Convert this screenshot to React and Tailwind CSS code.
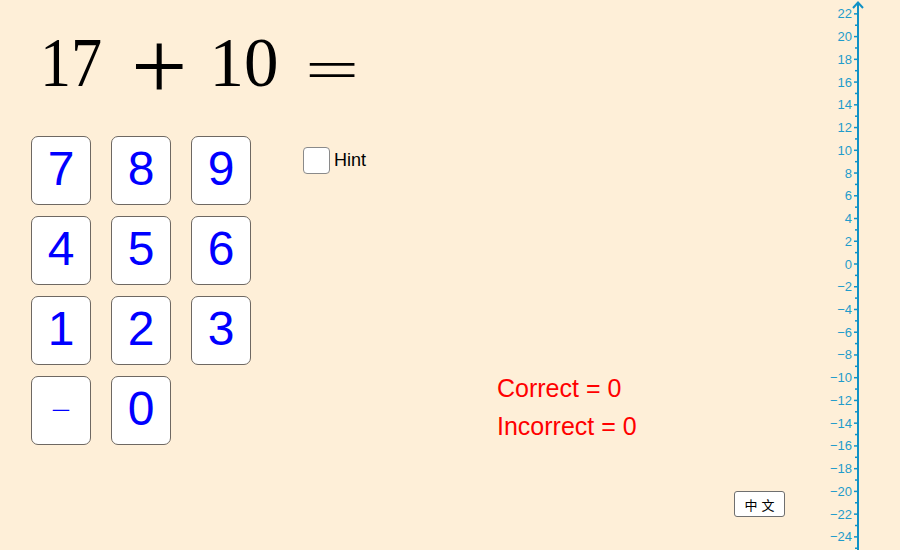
const KEYS = ['7', '8', '9', '4', '5', '6', '1', '2', '3', '−', '0']

const AXIS_X = 38
const UNIT = 11.37
const ZERO_Y = 264

function yOf(v) {
  return ZERO_Y - v * UNIT
}

function NumberAxis() {
  const ticks = []
  for (let v = -25; v <= 22; v++) ticks.push(v)
  const labels = ticks.filter((v) => v % 2 === 0 && v >= -24)

  return (
    <svg width="80" height="550" viewBox="0 0 80 550" className="shrink-0">
      <line x1={AXIS_X} y1="2" x2={AXIS_X} y2="550" stroke="#1192c6" strokeWidth="2" />
      <polyline
        points={`${AXIS_X - 5},8 ${AXIS_X},2.5 ${AXIS_X + 5},8`}
        fill="none"
        stroke="#1192c6"
        strokeWidth="2"
      />
      {ticks.map((v) => (
        <line
          key={v}
          x1={v % 2 === 0 ? AXIS_X - 4 : AXIS_X - 3}
          y1={yOf(v)}
          x2={AXIS_X}
          y2={yOf(v)}
          stroke="#1192c6"
          strokeWidth="1.5"
        />
      ))}
      {labels.map((v) => (
        <text
          key={v}
          x={AXIS_X - 6}
          y={yOf(v) + 4.5}
          textAnchor="end"
          fill="#1f9ccb"
          fontSize="13"
          fontFamily="'Liberation Sans', Arial, sans-serif"
        >
          {v < 0 ? `−${-v}` : v}
        </text>
      ))}
    </svg>
  )
}

function Key({ label }) {
  const isMinus = label === '−'
  return (
    <button className="w-[60px] h-[69px] rounded-[7px] border border-[#6e6862] bg-white flex items-center justify-center pb-[4px] text-[#0000ff] font-['Liberation_Sans',Arial,sans-serif] leading-none">
      {isMinus ? (
        <span className="text-[34px] scale-y-50 inline-block pt-[2px]">−</span>
      ) : (
        <span className="text-[48px]">{label}</span>
      )}
    </button>
  )
}

export default function App() {
  return (
    <div className="w-[900px] h-[550px] overflow-hidden bg-[#feefd8] flex">
      <div className="flex-1 flex flex-col">
        {/* equation */}
        <div className="mt-[3px] pl-[31px] h-[85px] flex items-baseline gap-x-[20px] leading-none text-black font-['Liberation_Serif','Times_New_Roman',serif]">
          <span className="w-[80px] text-center inline-block text-[69px] scale-x-[0.9]">17</span>
          <span className="w-[50px] text-center inline-block text-[100px] relative top-[14px]">+</span>
          <span className="ml-[3px] w-[80px] text-center inline-block text-[69px]">10</span>
          <span className="ml-[1px] w-[50px] text-center inline-block text-[96px] relative top-[18px] scale-y-[0.6] origin-[50%_42px]">=</span>
        </div>

        <div className="mt-[48px] pl-[31px] flex gap-x-[52px]">
          <div className="grid grid-cols-[60px_60px_60px] gap-x-[20px] gap-y-[11px]">
            {KEYS.map((k) => (
              <Key key={k} label={k} />
            ))}
          </div>

          <div className="flex-1 flex flex-col justify-between pt-[11px]">
            <label className="self-start flex items-center gap-[4px] text-[18px] text-black font-['Liberation_Sans',Arial,sans-serif]">
              <span className="w-[27px] h-[27px] rounded-[4px] border border-[#8a8a8a] bg-white" />
              Hint
            </label>
            <div className="pl-[194px] text-[25px] leading-[38px] text-[#f00] font-['Liberation_Sans',Arial,sans-serif] whitespace-nowrap">
              <p>Correct = 0</p>
              <p>Incorrect = 0</p>
            </div>
          </div>
        </div>

        <div className="mt-[46px] pr-[35px] flex justify-end">
          <button className="w-[51px] h-[26px] rounded-[3px] border border-[#6f6f6f] bg-white text-[13px] tracking-[4px] pl-[4px] text-black font-['Noto_Sans_CJK_SC',sans-serif] leading-none">
            中文
          </button>
        </div>
      </div>

      <NumberAxis />
    </div>
  )
}
